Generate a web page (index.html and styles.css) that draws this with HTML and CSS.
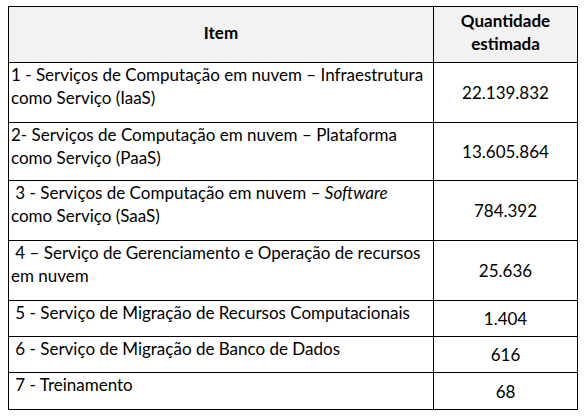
FILE: index.html
```html
<!DOCTYPE html>
<html lang="pt-BR">
<head>
<meta charset="UTF-8">
<meta name="viewport" content="width=device-width, initial-scale=1.0">
<title>Quantidades estimadas</title>
<link rel="stylesheet" href="styles.css">
</head>
<body>
<table class="items">
  <thead>
    <tr>
      <th class="col-item">Item</th>
      <th class="col-qty">Quantidade<br>estimada</th>
    </tr>
  </thead>
  <tbody>
    <tr class="tall">
      <td class="desc">1 - Serviços de Computação em nuvem – Infraestrutura como Serviço (IaaS)</td>
      <td class="qty">22.139.832</td>
    </tr>
    <tr class="mid">
      <td class="desc">2- Serviços de Computação em nuvem – Plataforma como Serviço (PaaS)</td>
      <td class="qty">13.605.864</td>
    </tr>
    <tr class="tall">
      <td class="desc">&nbsp;3 - Serviços de Computação em nuvem – <em>Software</em> como Serviço (SaaS)</td>
      <td class="qty">784.392</td>
    </tr>
    <tr class="tall">
      <td class="desc">&nbsp;4 – Serviço de Gerenciamento e Operação de recursos em nuvem</td>
      <td class="qty">25.636</td>
    </tr>
    <tr class="short">
      <td class="desc">&nbsp;5 - Serviço de Migração de Recursos Computacionais</td>
      <td class="qty">1.404</td>
    </tr>
    <tr class="short">
      <td class="desc">&nbsp;6 - Serviço de Migração de Banco de Dados</td>
      <td class="qty">616</td>
    </tr>
    <tr class="short last">
      <td class="desc">&nbsp;7 - Treinamento</td>
      <td class="qty">68</td>
    </tr>
  </tbody>
</table>
</body>
</html>
```

FILE: styles.css
```css
body {
  margin: 0;
  padding: 6px 0 0 8px;
  background: #fff;
  font-family: Lato, "Open Sans", sans-serif;
  color: #000;
}

.items {
  border-collapse: collapse;
  width: 570px;
  font-size: 17px;
  line-height: 23px;
}

.items th,
.items td {
  border: 1px solid #000;
  padding: 0 2px;
}

.items thead th {
  background: #f2f2f2;
  height: 50px;
  padding-bottom: 5px;
  font-weight: bold;
  text-align: center;
  vertical-align: middle;
}

.col-item {
  width: 420px;
}

.desc {
  vertical-align: top;
  text-align: left;
}

.qty {
  text-align: center;
  vertical-align: middle;
}

.tall td {
  height: 59px;
}

.mid td {
  height: 57px;
}

.short td {
  height: 35px;
}

.short.last td {
  height: 36px;
}
```
